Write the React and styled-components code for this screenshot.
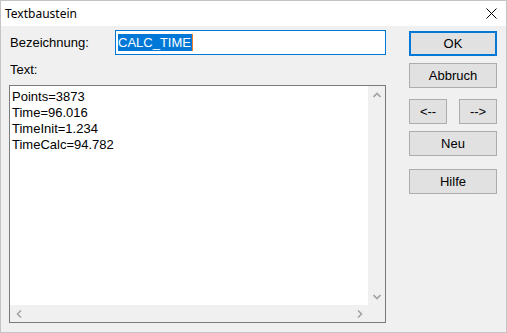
import styled, { createGlobalStyle } from 'styled-components'

const GlobalStyle = createGlobalStyle`
  html, body {
    margin: 0;
    padding: 0;
    background: #ffffff;
  }
  * {
    box-sizing: border-box;
  }
`

const Window = styled.div`
  width: 507px;
  height: 333px;
  border: 1px solid #c4c4c4;
  background: #f0f0f0;
  display: flex;
  flex-direction: column;
  font-family: "Liberation Sans", Arial, sans-serif;
  font-size: 13px;
  color: #000;
`

const TitleBar = styled.div`
  height: 25px;
  background: #ffffff;
  display: flex;
  align-items: center;
  justify-content: space-between;
  padding: 0 9px 0 4px;
  font-family: "Noto Sans", "Liberation Sans", sans-serif;
  font-size: 12px;
`

const Body = styled.div`
  flex: 1;
  display: flex;
  gap: 23px;
  padding: 4px 9px 0 8px;
`

const LeftColumn = styled.div`
  width: 377px;
  display: flex;
  flex-direction: column;
`

const FieldRow = styled.div`
  display: flex;
  align-items: center;
  height: 25px;
`

const Label = styled.div`
  width: 106px;
  padding-left: 1px;
  line-height: 16px;
`

const Field = styled.div`
  width: 271px;
  height: 25px;
  border: 1px solid #0078d7;
  background: #fff;
  display: flex;
  align-items: center;
  padding-left: 2px;
`

const Selected = styled.span`
  background: #0078d7;
  color: #fff;
  line-height: 17px;
  padding-right: 1px;
  border-right: 1px solid #f07c20;
`

const TextLabel = styled.div`
  margin: 7px 0 7px 1px;
  line-height: 16px;
`

const TextBox = styled.div`
  height: 238px;
  border: 1px solid #7a7a7a;
  display: grid;
  grid-template-columns: 1fr 17px;
  grid-template-rows: 1fr 17px;
`

const Content = styled.div`
  background: #fff;
  padding: 3px 2px;
  line-height: 16px;
`

const ScrollBar = styled.div`
  background: #f0f0f0;
  display: flex;
  flex-direction: ${p => (p.$vertical ? 'column' : 'row')};
  justify-content: space-between;
  align-items: center;
`

const ArrowCell = styled.div`
  width: 17px;
  height: 17px;
  display: flex;
  align-items: center;
  justify-content: center;
`

const Corner = styled.div`
  background: #f0f0f0;
`

const RightColumn = styled.div`
  width: 88px;
  padding-top: 1px;
  display: flex;
  flex-direction: column;
`

const Button = styled.div`
  width: ${p => p.$width || 88}px;
  height: 25px;
  margin-top: ${p => p.$gap || 0}px;
  background: #e1e1e1;
  border: ${p => (p.$default ? '2px solid #0078d7' : '1px solid #adadad')};
  display: flex;
  align-items: center;
  justify-content: center;
`

const ButtonPair = styled.div`
  display: flex;
  justify-content: space-between;
  margin-top: 11px;
`

const Chevron = ({ dir }) => {
  const paths = {
    up: 'M0.5 5 L4 1.5 L7.5 5',
    down: 'M0.5 1 L4 4.5 L7.5 1',
    left: 'M5 0.5 L1.5 4 L5 7.5',
    right: 'M1 0.5 L4.5 4 L1 7.5',
  }
  const vertical = dir === 'up' || dir === 'down'
  return (
    <svg width={vertical ? 8 : 6} height={vertical ? 6 : 8} viewBox={vertical ? '0 0 8 6' : '0 0 6 8'}>
      <path d={paths[dir]} fill="none" stroke="#a3a3a3" strokeWidth="1.6" />
    </svg>
  )
}

const CloseIcon = () => (
  <svg width="11" height="11" viewBox="0 0 11 11">
    <path d="M0.5 0.5 L10.5 10.5 M10.5 0.5 L0.5 10.5" stroke="#000" strokeWidth="1" />
  </svg>
)

const lines = ['Points=3873', 'Time=96.016', 'TimeInit=1.234', 'TimeCalc=94.782']

function App() {
  return (
    <>
      <GlobalStyle />
      <Window>
        <TitleBar>
          <span>Textbaustein</span>
          <CloseIcon />
        </TitleBar>
        <Body>
          <LeftColumn>
            <FieldRow>
              <Label>Bezeichnung:</Label>
              <Field>
                <Selected>CALC_TIME</Selected>
              </Field>
            </FieldRow>
            <TextLabel>Text:</TextLabel>
            <TextBox>
              <Content>
                {lines.map(line => (
                  <div key={line}>{line}</div>
                ))}
              </Content>
              <ScrollBar $vertical>
                <ArrowCell><Chevron dir="up" /></ArrowCell>
                <ArrowCell><Chevron dir="down" /></ArrowCell>
              </ScrollBar>
              <ScrollBar>
                <ArrowCell><Chevron dir="left" /></ArrowCell>
                <ArrowCell><Chevron dir="right" /></ArrowCell>
              </ScrollBar>
              <Corner />
            </TextBox>
          </LeftColumn>
          <RightColumn>
            <Button $default>OK</Button>
            <Button $gap={7}>Abbruch</Button>
            <ButtonPair>
              <Button $width={38}>&lt;--</Button>
              <Button $width={38}>--&gt;</Button>
            </ButtonPair>
            <Button $gap={7}>Neu</Button>
            <Button $gap={13}>Hilfe</Button>
          </RightColumn>
        </Body>
      </Window>
    </>
  )
}

export default App
